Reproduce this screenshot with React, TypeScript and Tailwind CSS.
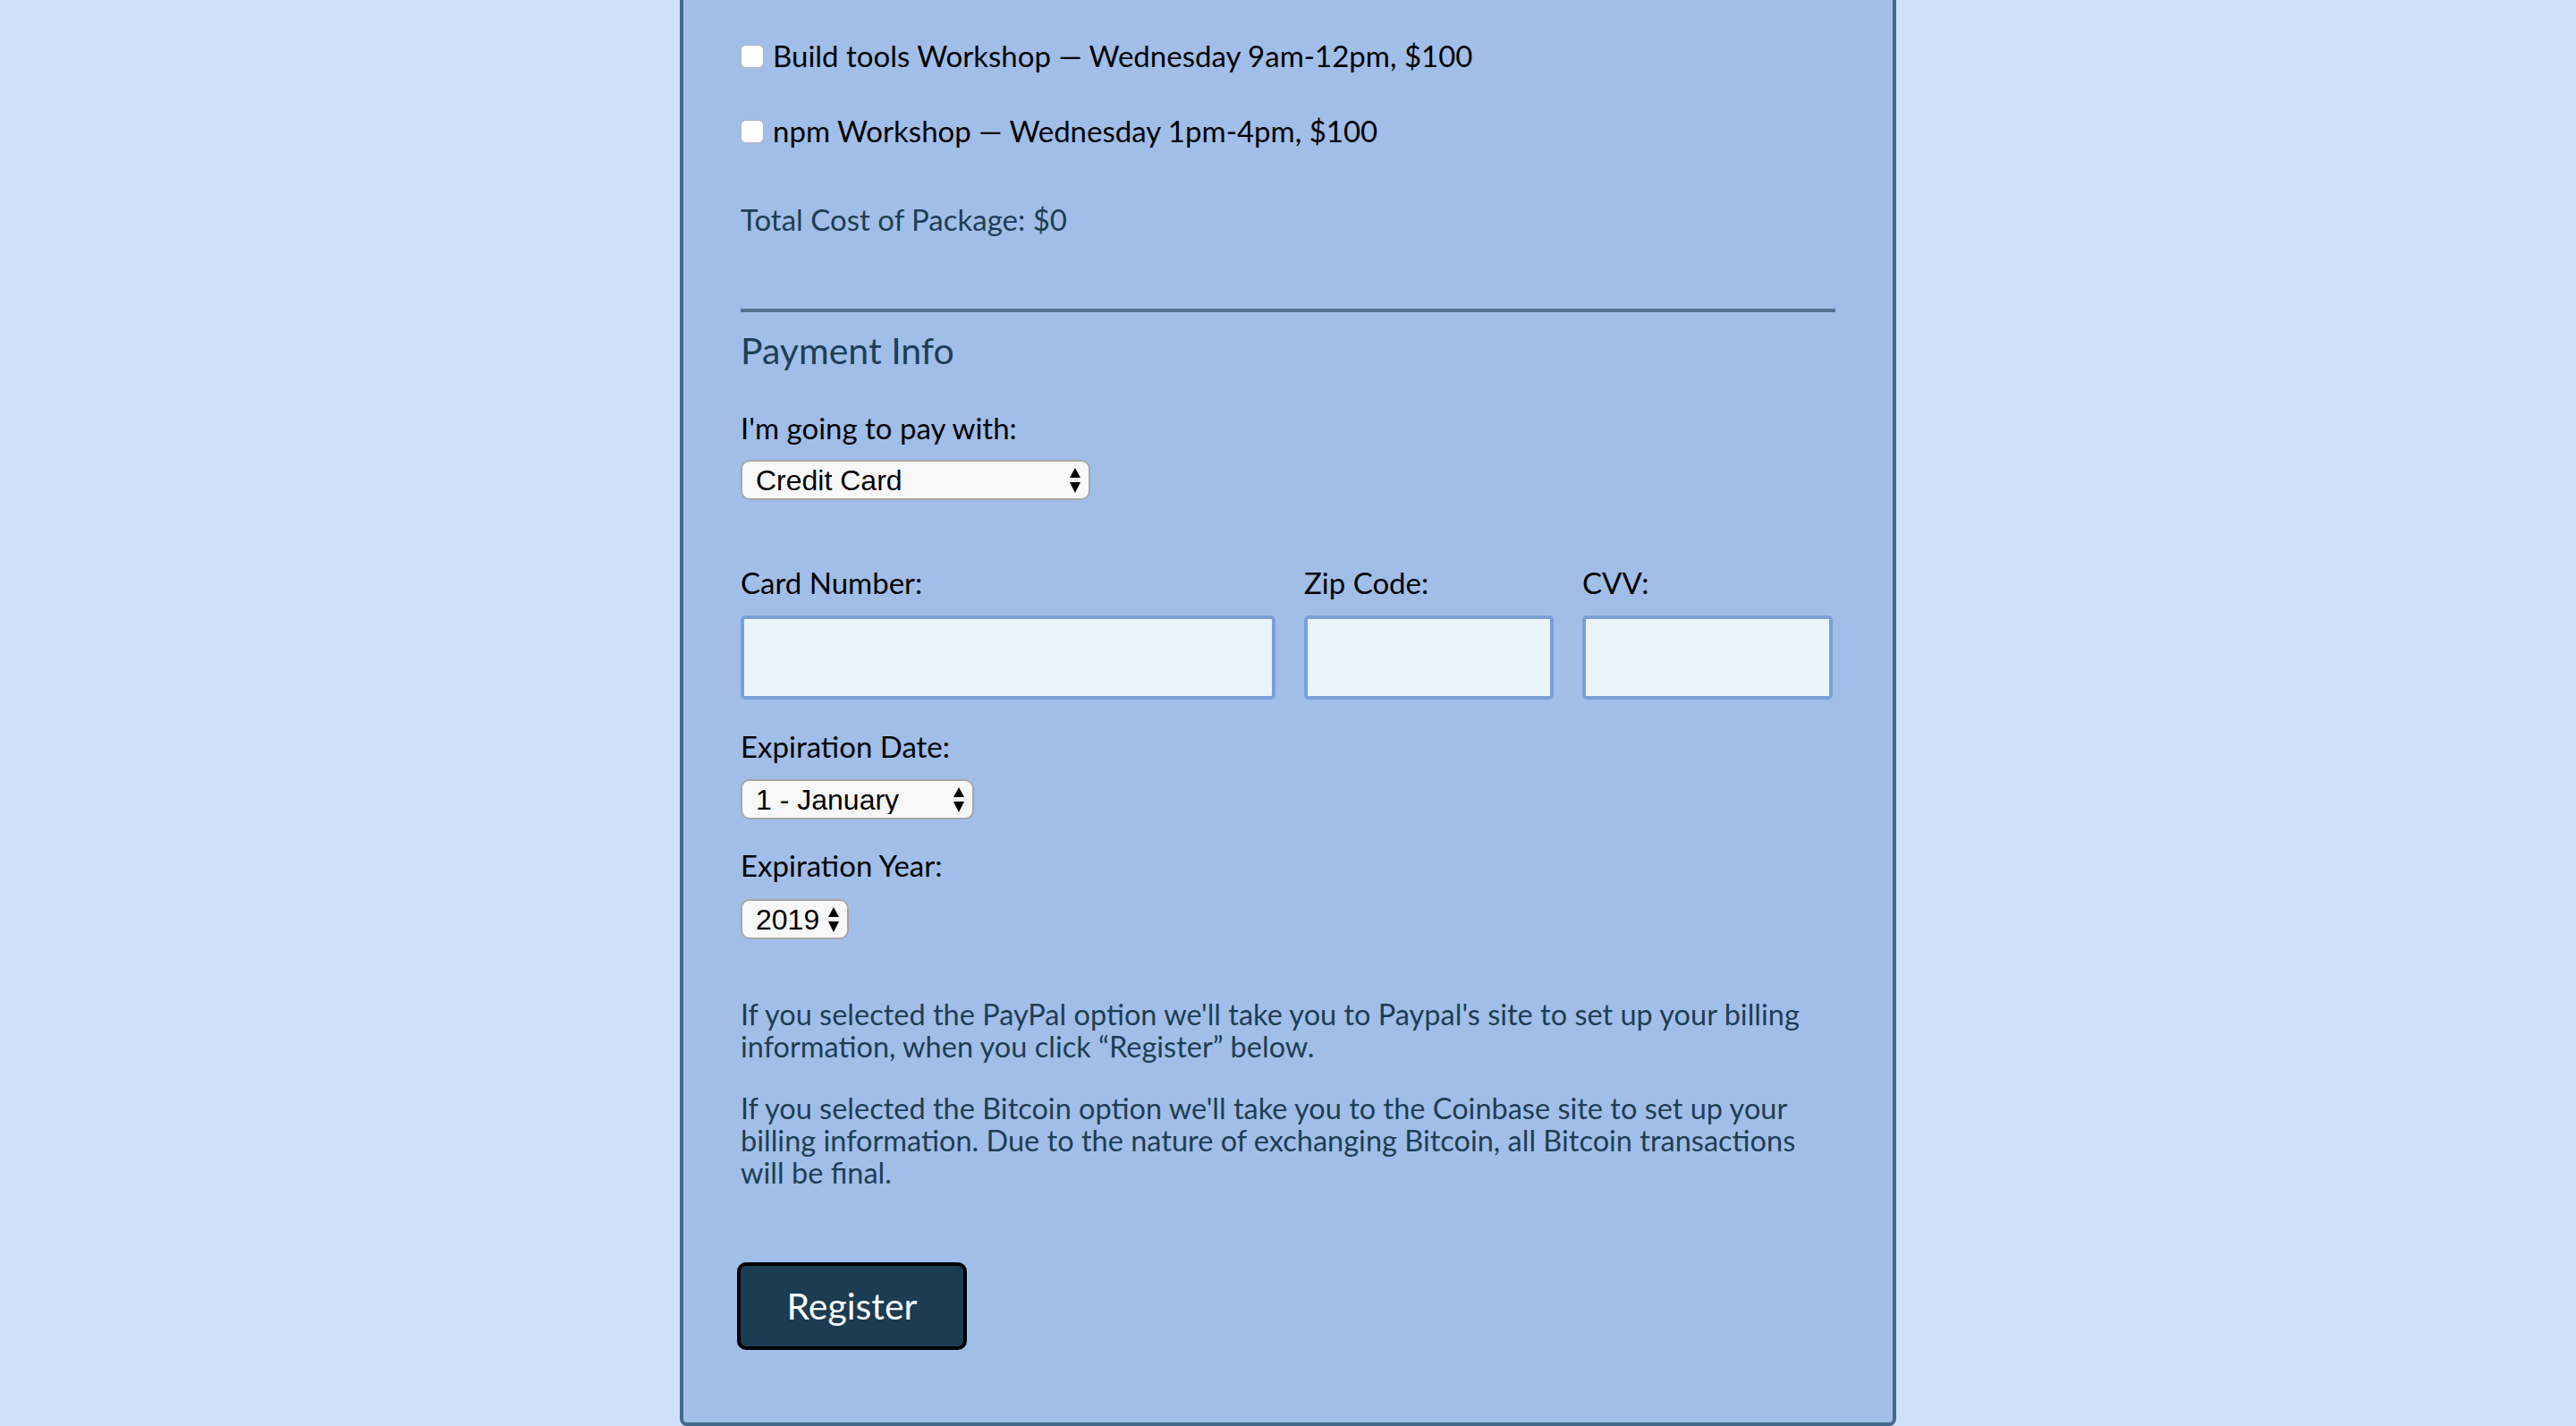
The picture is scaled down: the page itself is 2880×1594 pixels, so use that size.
import { ReactNode } from 'react';

const font = { fontFamily: 'Lato, "Noto Sans", sans-serif' };

function Workshop({ label }: { label: string }) {
  return (
    <label className="flex items-center h-[40px] gap-[10px] text-[33px] text-black">
      <input
        type="checkbox"
        className="appearance-none w-[26px] h-[26px] rounded-[6px] bg-white border border-[#b4b4b4] shrink-0"
      />
      <span>{label}</span>
    </label>
  );
}

function Arrows() {
  return (
    <svg
      className="absolute right-[11px] top-1/2 -translate-y-1/2 pointer-events-none"
      width="12"
      height="28"
      viewBox="0 0 12 28"
    >
      <path d="M6 0 L12 11 L0 11 Z" fill="#000" />
      <path d="M0 16 L12 16 L6 28 Z" fill="#000" />
    </svg>
  );
}

function Select({ width, children }: { width: string; children: ReactNode }) {
  return (
    <div className={`relative ${width}`}>
      <select
        className="appearance-none w-full h-[45px] rounded-[10px] border-2 border-[#a6a6a6] bg-[#f8f8f8] pl-[15px] text-[32px] leading-none text-black outline-none"
        style={{ fontFamily: '"Liberation Sans", Arial, sans-serif' }}
      >
        {children}
      </select>
      <Arrows />
    </div>
  );
}

function Label({ children, className = '' }: { children: ReactNode; className?: string }) {
  return <label className={`block text-[33px] leading-[40px] text-black ${className}`}>{children}</label>;
}

function TextInput() {
  return (
    <input
      type="text"
      className="w-full h-[94px] rounded-[5px] border-4 border-[#7b9fd7] bg-[#eaf5fb] px-3 text-[32px] outline-none"
    />
  );
}

export default function App() {
  return (
    <div className="min-h-screen bg-[#d0e0f8] flex justify-center" style={font}>
      <form className="w-[1360px] bg-[#a1bee9] border-x-4 border-b-4 border-[#436a8a] rounded-b-[8px] px-[64px] pt-[43px] pb-[80px]">
        <Workshop label="Build tools Workshop — Wednesday 9am-12pm, $100" />
        <div className="mt-[44px]">
          <Workshop label="npm Workshop — Wednesday 1pm-4pm, $100" />
        </div>
        <p className="mt-[58px] text-[33px] leading-[40px] text-[#1e3e54]">Total Cost of Package: $0</p>

        <div className="mt-[80px] h-[4px] bg-[#52738f]" />

        <h3 className="mt-[18px] text-[41px] leading-[50px] text-[#1d3f57]">Payment Info</h3>

        <Label className="mt-[41px]">I'm going to pay with:</Label>
        <div className="mt-[16px]">
          <Select width="w-[391px]">
            <option>Credit Card</option>
            <option>PayPal</option>
            <option>Bitcoin</option>
          </Select>
        </div>

        <div className="mt-[72px] grid grid-cols-[598px_279px_280px] gap-x-[32px]">
          <div>
            <Label>Card Number:</Label>
            <div className="mt-[17px]">
              <TextInput />
            </div>
          </div>
          <div>
            <Label>Zip Code:</Label>
            <div className="mt-[17px]">
              <TextInput />
            </div>
          </div>
          <div>
            <Label>CVV:</Label>
            <div className="mt-[17px]">
              <TextInput />
            </div>
          </div>
        </div>

        <Label className="mt-[32px]">Expiration Date:</Label>
        <div className="mt-[17px]">
          <Select width="w-[261px]">
            <option>1 - January</option>
            <option>2 - February</option>
            <option>3 - March</option>
          </Select>
        </div>

        <Label className="mt-[31px]">Expiration Year:</Label>
        <div className="mt-[18px]">
          <Select width="w-[121px]">
            <option>2019</option>
            <option>2020</option>
            <option>2021</option>
          </Select>
        </div>

        <p className="mt-[66px] w-[1224px] text-[32.5px] leading-[36px] text-[#1e3e54]">
          If you selected the PayPal option we'll take you to Paypal's site to set up your billing information, when you
          click “Register” below.
        </p>
        <p className="mt-[33px] w-[1224px] text-[32.5px] leading-[36px] text-[#1e3e54]">
          If you selected the Bitcoin option we'll take you to the Coinbase site to set up your billing information. Due
          to the nature of exchanging Bitcoin, all Bitcoin transactions will be final.
        </p>

        <button
          type="button"
          className="mt-[82px] -ml-[4px] h-[98px] w-[257px] rounded-[10px] border-4 border-black bg-[#1b3c52] text-[41px] text-white"
        >
          Register
        </button>
      </form>
    </div>
  );
}
